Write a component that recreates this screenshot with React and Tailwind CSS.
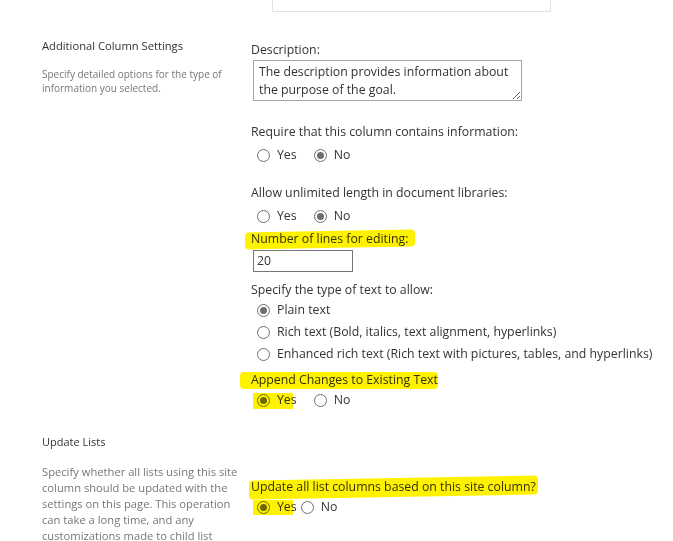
import React from "react";

const FONT = { fontFamily: '"Open Sans", "Noto Sans", sans-serif' };

// yellow marker stroke laid over the text
const Mark = ({ children, className }) => (
  <span className="relative inline-block">
    {children}
    <span className={`pointer-events-none absolute bg-[#fff200] mix-blend-multiply ${className}`} />
  </span>
);

const Radio = ({ checked }) => (
  <span className="inline-flex w-[13px] h-[13px] shrink-0 items-center justify-center rounded-full border border-[#6e6e6e] bg-white">
    {checked && <span className="w-[7px] h-[7px] rounded-full bg-[#6e6e6e]" />}
  </span>
);

const YesNo = ({ yes, tight }) => (
  <div className="flex items-center h-5 pl-[6px]">
    <Radio checked={yes} />
    <span className="ml-[7px]">Yes</span>
    <span className={tight ? "ml-[4px] flex items-center" : "ml-[17px] flex items-center"}>
      <Radio checked={!yes} />
    </span>
    <span className="ml-[7px]">No</span>
  </div>
);

const Option = ({ checked, label, className = "" }) => (
  <div className={`flex items-center h-5 pl-[6px] ${className}`}>
    <Radio checked={checked} />
    <span className="ml-[7px] whitespace-nowrap">{label}</span>
  </div>
);

export default function App() {
  return (
    <div className="w-[673px] h-[541px] overflow-hidden bg-white text-[#333]" style={FONT}>
      <div className="ml-[272px] w-[279px] h-[12px] border border-t-0 border-[#e1e1e1]" />

      {/* Additional Column Settings */}
      <div className="flex mt-[26px]">
        <div className="w-[251px] pl-[42px] pr-4">
          <h3 className="text-[11.2px] leading-4 text-[#333]">Additional Column Settings</h3>
          <p className="mt-[13px] text-[10px] leading-[14px] text-[#777] w-[190px]">
            Specify detailed options for the type of information you selected.
          </p>
        </div>

        <div className="flex flex-col text-[12.3px] pt-[2px]">
          <div className="leading-5">Description:</div>
          <textarea
            readOnly
            defaultValue="The description provides information about the purpose of the goal."
            className="ml-[2px] w-[269px] h-[41px] border border-[#a6a6a6] px-[5px] py-[2px] text-[12.3px] leading-[18px] text-[#333] overflow-hidden outline-none"
            style={FONT}
          />
          <div className="mt-[21px] leading-5">Require that this column contains information:</div>
          <div className="mt-[3px]"><YesNo yes={false} /></div>

          <div className="mt-[18px] leading-5">Allow unlimited length in document libraries:</div>
          <div className="mt-[3px]"><YesNo yes={false} /></div>

          <div className="mt-[3px] leading-5">
            <Mark className="-left-[6px] -right-[6px] top-[2px] bottom-[1px] -skew-y-[1deg] rounded-sm">
              Number of lines for editing:
            </Mark>
          </div>
          <div className="mt-[1px] ml-[2px] w-[100px] h-[22px] border border-[#767676] px-[3px] leading-5 text-[#333]">20</div>

          <div className="mt-[8px] leading-5">Specify the type of text to allow:</div>
          <Option checked label="Plain text" />
          <Option className="mt-[2px]" label="Rich text (Bold, italics, text alignment, hyperlinks)" />
          <Option className="mt-[2px]" label="Enhanced rich text (Rich text with pictures, tables, and hyperlinks)" />

          <div className="mt-[6px] leading-5">
            <Mark className="-left-[11px] right-0 top-[2px] bottom-[1px] rounded-sm">
              Append Changes to Existing Text
            </Mark>
          </div>
          <div className="relative">
            <YesNo yes />
            <span className="pointer-events-none absolute left-[2px] top-[3px] w-[40px] h-[16px] bg-[#fff200] mix-blend-multiply" />
          </div>
        </div>
      </div>

      {/* Update Lists */}
      <div className="flex mt-[24px]">
        <div className="w-[251px] pl-[42px] pr-4">
          <h3 className="text-[11px] leading-4 text-[#333]">Update Lists</h3>
          <p className="mt-[14px] text-[11.2px] leading-4 text-[#777] w-[200px]">
            Specify whether all lists using this site column should be updated with the settings on this page. This operation can take a long time, and any customizations made to child list
          </p>
        </div>

        <div className="flex flex-col text-[12.3px] pt-[43px]">
          <div className="leading-5">
            <Mark className="-left-[2px] -right-[2px] top-[1px] bottom-0 -skew-y-[1deg] rounded-sm">
              Update all list columns based on this site column?
            </Mark>
          </div>
          <div className="relative">
            <YesNo yes tight />
            <span className="pointer-events-none absolute left-[2px] top-[3px] w-[40px] h-[15px] bg-[#fff200] mix-blend-multiply" />
          </div>
        </div>
      </div>
    </div>
  );
}
